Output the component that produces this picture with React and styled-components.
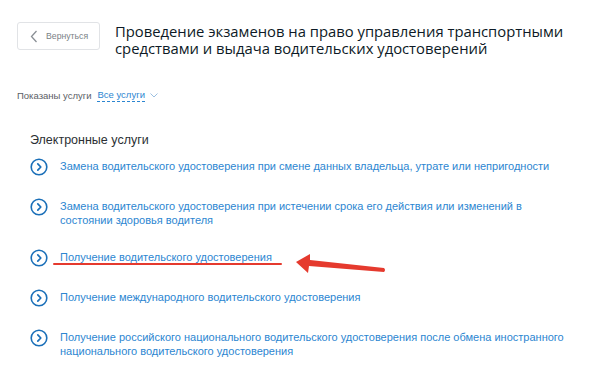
import React from "react";
import styled, { createGlobalStyle } from "styled-components";

const Global = createGlobalStyle`
  html, body { margin: 0; padding: 0; background: #fff; }
  body { font-family: "Liberation Sans", Arial, sans-serif; }
`;

const Page = styled.div`
  position: relative;
  width: 600px;
  height: 371px;
  overflow: hidden;
  padding: 22px 0 0 17px;
  box-sizing: border-box;
`;

const Header = styled.header`
  display: flex;
  align-items: flex-start;
  gap: 15px;
`;

const BackButton = styled.button`
  flex: none;
  display: flex;
  align-items: center;
  gap: 8px;
  width: 83px;
  height: 28px;
  padding: 0 0 0 12px;
  box-sizing: border-box;
  background: #fff;
  border: 1px solid #e1e3e6;
  border-radius: 3px;
  font-family: "Liberation Sans", Arial, sans-serif;
  font-size: 8.7px;
  color: #7a7f85;
`;

const Title = styled.h1`
  margin: 1px 0 0;
  font-family: "Open Sans", "Noto Sans", sans-serif;
  font-weight: 400;
  font-size: 14.8px;
  line-height: 17px;
  color: #0d1a26;
`;

const FilterRow = styled.div`
  display: flex;
  align-items: center;
  gap: 6px;
  margin-top: 31px;
  font-size: 9.5px;
  line-height: 13px;
  color: #5b6066;
`;

const FilterLink = styled.span`
  display: inline-flex;
  align-items: center;
  gap: 5px;
  color: #2c86d1;
`;

const Dashed = styled.span`
  border-bottom: 1px dashed #2c86d1;
  line-height: 13px;
`;

const Section = styled.section`
  margin: 31px 0 0 13px;
`;

const SectionTitle = styled.h2`
  margin: 0 0 11px;
  font-weight: 400;
  font-size: 12.5px;
  line-height: 14px;
  color: #2b2f33;
`;

const List = styled.ul`
  list-style: none;
  margin: 0;
  padding: 0;
  display: flex;
  flex-direction: column;
  gap: 22px;
`;

const Item = styled.li`
  display: flex;
  align-items: flex-start;
  gap: 12px;
`;

const Link = styled.a`
  position: relative;
  font-size: 11px;
  line-height: 14px;
  color: #2c86d1;
  padding-top: 1px;
  max-width: 516px;
`;

const Highlight = styled.span`
  position: absolute;
  left: -7px;
  right: -10px;
  bottom: -1px;
  height: 2px;
  background: #e53a2e;
  border-radius: 1px;
`;

const Arrow = styled.svg`
  position: absolute;
  left: 290px;
  top: 250px;
`;

const CircleIcon = () => (
  <svg width="18" height="18" viewBox="0 0 18 18" style={{ flex: "none" }}>
    <circle cx="9" cy="9" r="7.8" fill="none" stroke="#1a6fb8" strokeWidth="1.6" />
    <path d="M7.8 5.8 L10.8 9 L7.8 12.2" fill="none" stroke="#1a6fb8" strokeWidth="1.7" strokeLinecap="round" strokeLinejoin="round" />
  </svg>
);

const items = [
  { text: "Замена водительского удостоверения при смене данных владельца, утрате или непригодности" },
  { text: "Замена водительского удостоверения при истечении срока его действия или изменений в состоянии здоровья водителя" },
  { text: "Получение водительского удостоверения", mark: true },
  { text: "Получение международного водительского удостоверения" },
  { text: "Получение российского национального водительского удостоверения после обмена иностранного национального водительского удостоверения" },
];

export default function App() {
  return (
    <Page>
      <Global />
      <Header>
        <BackButton>
          <svg width="8" height="13" viewBox="0 0 8 13">
            <path d="M6.5 1 L1.5 6.5 L6.5 12" fill="none" stroke="#8a8f95" strokeWidth="1.3" />
          </svg>
          Вернуться
        </BackButton>
        <Title>
          Проведение экзаменов на право управления транспортными средствами и выдача водительских удостоверений
        </Title>
      </Header>
      <FilterRow>
        <span>Показаны услуги</span>
        <FilterLink>
          <Dashed>Все услуги</Dashed>
          <svg width="8" height="5" viewBox="0 0 8 5">
            <path d="M0.5 0.5 L4 4 L7.5 0.5" fill="none" stroke="#9bbfe0" strokeWidth="1" />
          </svg>
        </FilterLink>
      </FilterRow>
      <Section>
        <SectionTitle>Электронные услуги</SectionTitle>
        <List>
          {items.map((it, i) => (
            <Item key={i}>
              <CircleIcon />
              <Link>
                {it.text}
                {it.mark && <Highlight />}
              </Link>
            </Item>
          ))}
        </List>
      </Section>
      <Arrow width="100" height="30" viewBox="0 0 100 30">
        <path d="M6 12 L20 4 L20 10 L94 18 Q96 20 94 22 L19 16 L18 23 Z" fill="#e53a2e" />
      </Arrow>
    </Page>
  );
}
